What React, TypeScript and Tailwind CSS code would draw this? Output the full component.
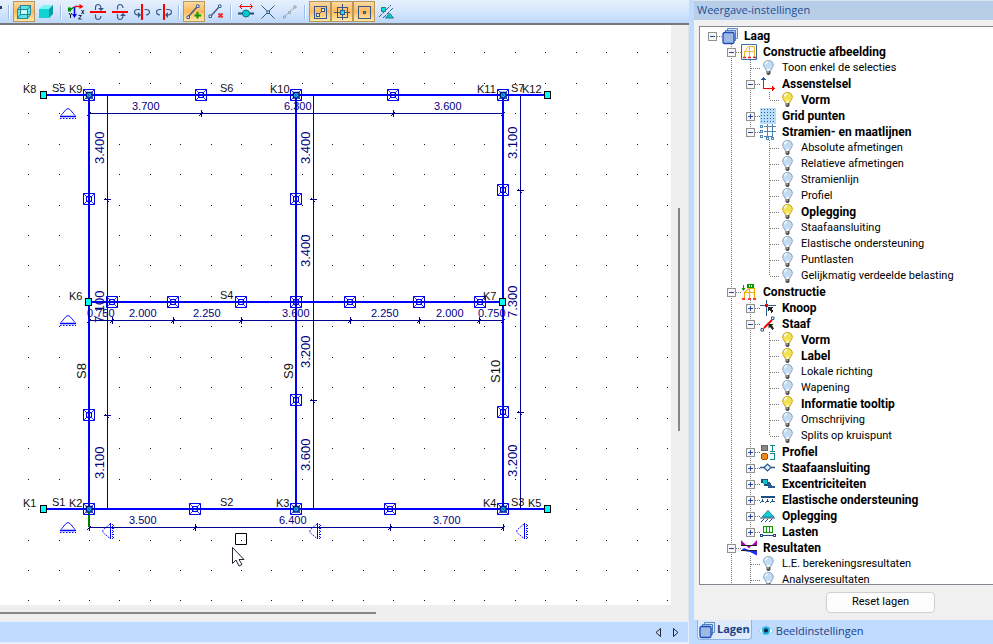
import { useState } from "react";
import type { ReactNode } from "react";

const NAVY = "#35598a";

/* ---------- toolbar icons ---------- */

function Icon({ children, crisp = false }: { children: ReactNode; crisp?: boolean }) {
  return (
    <svg
      className="block h-4 w-4 shrink-0 overflow-visible"
      viewBox="0 0 16 16"
      fill="none"
      shapeRendering={crisp ? "crispEdges" : "auto"}
      aria-hidden="true"
    >
      {children}
    </svg>
  );
}

const CubeWire = () => (
  <Icon>
    <path d="M1.500 5.500 4.500 1.500h10v9l-3 4h-10z" fill="#5fe3e3" />
    <path d="M5 6h6v4H5z" fill="#c4f8f8" />
    <path
      d="M1.500 5.500h10v9h-10zM1.500 5.500l3-4h10l-3 4M11.500 14.500l3-4v-9M4.500 1.500v9h10M1.500 14.500l3-4"
      stroke="#1a7f8c"
      strokeWidth="0.900"
    />
  </Icon>
);

const CubeSolid = () => (
  <Icon>
    <path d="M1 5h10v9H1z" fill="#12d3d3" />
    <path d="M1 5l4-4h10l-4 4z" fill="#7df3f3" />
    <path d="M11 5l4-4v9l-4 4z" fill="#0b9aa6" />
  </Icon>
);

const AxesIcon = () => (
  <Icon>
    <path d="M6.500 2.500H13" stroke="#f00" strokeWidth="1.500" />
    <path d="M11.500 0l4 2.500-4 2.500z" fill="#f00" />
    <path d="M6.500 3v9" stroke="#00f" strokeWidth="1.500" />
    <path d="M4 10h5l-2.500 4z" fill="#00f" />
    <path d="M6 3 1.500 6.500" stroke="#080" strokeWidth="1.500" />
    <path d="M0 3.500h3v4H0z" fill="#080" />
    <path d="M1 9l1.500 2L4 9M2.500 11v3" stroke="#111" />
    <path d="M13.500 6l2.500 4M16 6l-2.500 4M10.500 11.500h3l-3 3.500h3" stroke="#111" strokeWidth="0.900" />
  </Icon>
);

function RotateIcon({ vertical = false, flip = false }: { vertical?: boolean; flip?: boolean }) {
  return (
    <Icon>
      <g transform={`${vertical ? "rotate(90 8 8) " : ""}${flip ? "translate(0 16) scale(1 -1)" : ""}`}>
        <path d="M5.500 6V4q0-3.500 2.500-3.500T11 4v2M5.500 10.500v1.500q0 3.500 2.500 3.500t3-3.500" stroke={NAVY} strokeWidth="1.200" />
        <path d="M8 4h6l-3 3z" fill={NAVY} />
      </g>
      {vertical ? (
        <path d="M8 0v16" stroke="#f00" strokeWidth="2" />
      ) : (
        <path d="M0 8h16" stroke="#f00" strokeWidth="2" />
      )}
    </Icon>
  );
}

const AddBar = () => (
  <Icon>
    <path d="M2.500 12.500l8-9" stroke={NAVY} strokeWidth="1.300" />
    <path d="M1 12h2.500v2.500H1zM10.500 1H13v2.500h-2.500z" fill="#fff" stroke={NAVY} />
    <path d="M11.500 8v6.500M8.500 11.500h6.500" stroke="#0a9a00" strokeWidth="2" />
  </Icon>
);

const RemoveBar = () => (
  <Icon>
    <path d="M2.500 12.500l8-9" stroke={NAVY} strokeWidth="1.300" />
    <path d="M1 11h2.500v2.500H1zM10.500 1H13v2.500h-2.500z" fill="#fff" stroke={NAVY} />
    <path d="M10.500 9.500l4 4M14.500 9.500l-4 4" stroke="#f22" strokeWidth="2" />
  </Icon>
);

const SlideNode = () => (
  <Icon>
    <path d="M2 2.500h12" stroke="#f00" />
    <path d="M4 0 1.500 2.500 4 5M12 0l2.500 2.500L12 5" stroke="#f00" />
    <path d="M0 9.500h16" stroke="#1f4f80" strokeWidth="2" />
    <circle cx="8" cy="9.500" r="3.500" fill="#0cc" stroke="#0a6a80" />
  </Icon>
);

const CrossNode = () => (
  <Icon>
    <path d="M1.500 1.500l13 13M14.500 1.500l-13 13" stroke={NAVY} />
    <path d="M7 7h2.500v2.500H7z" fill="#dceaff" stroke={NAVY} />
  </Icon>
);

const SplitBar = () => (
  <Icon>
    <path d="M2 13 13.500 2.500" stroke="#9aa3ad" />
    <path d="M1.500 12h2v2h-2zM6.500 7.500h2v2h-2zM12 2h2v2h-2z" fill="#dceaff" stroke="#9aa3ad" />
  </Icon>
);

const SnapBar = () => (
  <Icon crisp>
    <path d="M2.500 2.500h12v12h-12z" stroke={NAVY} />
    <path d="M6 11l5-5" stroke={NAVY} />
    <path d="M4.500 9.500h3v3h-3zM9.500 4.500h3v3h-3z" fill="#ffe2a8" stroke={NAVY} />
  </Icon>
);

const SnapNode = () => (
  <Icon crisp>
    <path d="M3.500 3.500h10v10h-10zM8.500 0v16M0 8.500h16" stroke={NAVY} />
    <path d="M6.500 6.500h4v4h-4z" fill="#0ee" stroke={NAVY} />
  </Icon>
);

const SnapPoint = () => (
  <Icon crisp>
    <path d="M2.500 2.500h12v12h-12z" stroke={NAVY} />
    <path d="M7.500 7.500h2v2h-2z" fill="#3b8cd0" stroke={NAVY} />
  </Icon>
);

const SnapSupport = () => (
  <Icon>
    <path d="M1 13 13 1M5 14 15.500 3.500" stroke={NAVY} strokeDasharray="4 1" />
    <path d="M3.500 3.500h4v4h-4z" fill="#0dd" stroke="#287a90" />
    <path d="M11.500 9l4 5h-8z" fill="#0cc" stroke="#287a90" />
  </Icon>
);

type Tool = { label: string; icon: ReactNode; active?: boolean };

const toolGroups: Tool[][] = [
  [
    { label: "Draadmodel", icon: <CubeWire />, active: true },
    { label: "Volumemodel", icon: <CubeSolid /> },
  ],
  [
    { label: "Assen", icon: <AxesIcon /> },
    { label: "Roteer omhoog", icon: <RotateIcon /> },
    { label: "Roteer omlaag", icon: <RotateIcon flip /> },
    { label: "Roteer links", icon: <RotateIcon vertical flip /> },
    { label: "Roteer rechts", icon: <RotateIcon vertical /> },
  ],
  [
    { label: "Staaf toevoegen", icon: <AddBar />, active: true },
    { label: "Staaf verwijderen", icon: <RemoveBar /> },
  ],
  [
    { label: "Knoop verschuiven", icon: <SlideNode /> },
    { label: "Kruispunt", icon: <CrossNode /> },
    { label: "Staaf splitsen", icon: <SplitBar /> },
  ],
  [
    { label: "Selecteer staven", icon: <SnapBar />, active: true },
    { label: "Selecteer knopen", icon: <SnapNode />, active: true },
    { label: "Selecteer punten", icon: <SnapPoint />, active: true },
    { label: "Selecteer opleggingen", icon: <SnapSupport /> },
  ],
];

function Toolbar() {
  return (
    <div
      role="toolbar"
      className="flex h-[25px] shrink-0 items-start border-b-2 border-[#77797d] bg-linear-to-b from-[#e6f0fd] via-[#d5e6fc] to-[#bcd8fb] pt-px"
    >
      <div className="h-[21px] w-[5px] shrink-0 pt-[5px]">
        <span className="block h-[3px] w-[2px] bg-[#1f3d63]" />
      </div>
      {toolGroups.map((group, i) => (
        <div key={i} className="flex shrink-0 items-center">
          <span className="mx-[3px] h-[14px] w-[2px] border-r border-white bg-[#9dbde8]" />
          {group.map((tool) => (
            <button
              key={tool.label}
              type="button"
              aria-label={tool.label}
              className={`flex h-[21px] w-[22px] items-center justify-center ${
                tool.active
                  ? "border border-[#b8975c] bg-linear-to-b from-[#fbd9a0] via-[#fdb95c] to-[#ffe9a8]"
                  : ""
              }`}
            >
              {tool.icon}
            </button>
          ))}
        </div>
      ))}
    </div>
  );
}

/* ---------- drawing ---------- */

const gridX = Array.from({ length: 22 }, (_, i) => Math.floor(28.6 + 30.42 * i));
const gridY = Array.from({ length: 19 }, (_, i) => Math.floor(52.8 + 30.45 * i));

const innerNodes = [
  [201, 95], [393, 95],
  [89, 199], [296, 199], [503, 190],
  [112, 302], [173, 302], [241, 302], [296, 302], [350, 302], [419, 302], [480, 302],
  [89, 415], [296, 400], [503, 412],
  [195, 509], [390, 509],
];
const cornerNodes = [[89, 95], [296, 95], [503, 95], [89, 509], [296, 509], [503, 509]];
const endNodes = [[43, 95], [547, 95], [88, 302], [502, 302], [43, 509], [547, 509]];

const hTicks = [
  [89, 113], [201, 113], [393, 113], [503, 113],
  [89, 320], [112, 320], [173, 320], [241, 320], [350, 320], [419, 320], [479, 320], [503, 320],
  [89, 527], [195, 527], [390, 527], [503, 527],
];
const vTicks = [
  [107, 199], [107, 415], [313, 199], [313, 400], [520, 190], [520, 412],
];

const names: [string, number, number][] = [
  ["K8", 23, 93], ["S5", 52, 92], ["K9", 69, 93], ["S6", 220, 92], ["K10", 270, 93],
  ["K11", 477, 93], ["S7", 511, 92], ["K12", 522, 93],
  ["K6", 69, 300], ["S4", 220, 299], ["K7", 483, 300],
  ["K1", 23, 507], ["S1", 52, 506], ["K2", 69, 507], ["S2", 220, 506], ["K3", 276, 507],
  ["K4", 483, 507], ["S3", 511, 506], ["K5", 528, 507],
];
const barNames: [string, number, number][] = [["S8", 86, 379], ["S9", 293, 379], ["S10", 500, 383]];

const hDims: [string, number, number][] = [
  ["3.700", 132, 110], ["6.300", 284, 110], ["3.600", 434, 110],
  ["0.750", 87, 317], ["2.000", 129, 317], ["2.250", 193, 317], ["3.600", 282, 317],
  ["2.250", 371, 317], ["2.000", 436, 317], ["0.750", 478, 317],
  ["3.500", 129, 524], ["6.400", 279, 524], ["3.700", 433, 524],
];
const vDims: [string, number, number][] = [
  ["3.400", 104, 164], ["7.100", 104, 323], ["3.100", 104, 479],
  ["3.400", 310, 164], ["3.400", 310, 267], ["3.200", 310, 368], ["3.600", 310, 471],
  ["3.100", 517, 159], ["7.300", 517, 318], ["3.200", 517, 477],
];

function NodeBox({ x, y, corner = false }: { x: number; y: number; corner?: boolean }) {
  return (
    <g transform={`translate(${x} ${y})`} fill="none" stroke="#0000f0">
      <path d="M-5.500-5.500h11v11h-11z" />
      <path d="M-5.500-5.500l4 4M5.500-5.500l-4 4M-5.500 5.500l4-4M5.500 5.500l-4-4" strokeWidth="0.800" />
      {corner ? (
        <>
          <path d="M-2.500-2.500h5.500v5.500h-5.500z" fill="#22c8f0" stroke="#001a80" strokeWidth="1.500" />
          <path d="M-2-2l4.500 4.500M2.500-2l-4.500 4.500" stroke="#0a50c0" />
        </>
      ) : (
        <path d="M-2.500-2.500h5v5h-5zM-.5-.5h1v1h-1z" />
      )}
    </g>
  );
}

function Support({ x, y }: { x: number; y: number }) {
  return (
    <g transform={`translate(${x} ${y})`} fill="none" stroke="#00f">
      <path d="M1 7.500 6 1.500q2-2 4 0l5 6" strokeWidth="0.900" />
      <path d="M0 8.500h16" strokeWidth="1.500" />
      <path d="M0 10.500h16" strokeDasharray="1.500 1.500" />
    </g>
  );
}

function SideSupport({ x, y }: { x: number; y: number }) {
  return (
    <g transform={`translate(${x} ${y})`} fill="none" stroke="#00f">
      <path d="M8 1 1.500 6.500q-1.500 2 0 3.500L8 15.500" strokeWidth="0.900" strokeDasharray="2 1" />
      <path d="M8.500 0v16" />
      <path d="M10.500 1v16" strokeDasharray="1 1" />
      <path d="M11.500 2v15" strokeDasharray="1 2" />
    </g>
  );
}

function Model() {
  return (
    <svg
      className="block h-full w-full"
      fontFamily="'Liberation Sans', Arial, sans-serif"
      role="img"
      aria-label="Constructie"
    >
      <g transform="translate(0 -25)">
        <g fill="#111" shapeRendering="crispEdges">
          {gridY.map((y) => gridX.map((x) => <rect key={`${x}-${y}`} x={x} y={y} width="1" height="1" />))}
        </g>

        <path
          d="M89 113.500h414M89 320.500h414M89 527.500h414M107.500 96v413M313.500 96v413M520.500 96v413"
          stroke="#000090"
        />
        <g stroke="#000090">
          {hTicks.map(([x, y]) => (
            <path key={`${x}-${y}`} d={`M${x + 0.5} ${y - 3}v7M${x - 2} ${y + 3}l4-4`} />
          ))}
          {vTicks.map(([x, y]) => (
            <path key={`${x}-${y}`} d={`M${x - 3} ${y + 0.5}h7M${x - 2} ${y - 1}l4 4`} />
          ))}
        </g>

        <path d="M89 509v18" stroke="#008000" strokeWidth="2" />
        <path
          d="M43 95h505M89 302h414M43 509h505M89 95v414M296 95v414M503 95v414"
          stroke="#00f"
          strokeWidth="2"
        />

        {innerNodes.map(([x, y]) => (
          <NodeBox key={`${x}-${y}`} x={x} y={y} />
        ))}
        {cornerNodes.map(([x, y]) => (
          <NodeBox key={`${x}-${y}`} x={x} y={y} corner />
        ))}

        <g fontSize="11" fill="#000080">
          {hDims.map(([text, x, y]) => (
            <text key={`${x}-${y}`} x={x} y={y}>{text}</text>
          ))}
        </g>
        <g fontSize="13" fill="#000080">
          {vDims.map(([text, x, y]) => (
            <text key={`${x}-${y}`} transform={`translate(${x} ${y}) rotate(-90)`}>{text}</text>
          ))}
        </g>
        <g fontSize="11" fill="#111">
          {names.map(([text, x, y]) => (
            <text key={text} x={x} y={y}>{text}</text>
          ))}
        </g>
        <g fontSize="13" fill="#111">
          {barNames.map(([text, x, y]) => (
            <text key={text} transform={`translate(${x} ${y}) rotate(-90)`}>{text}</text>
          ))}
        </g>

        {endNodes.map(([x, y]) => (
          <rect key={`${x}-${y}`} x={x - 2.5} y={y - 3.5} width="6" height="7" fill="#0ff" stroke="#000" />
        ))}

        {[108, 315, 522].map((y) => (
          <Support key={y} x={60} y={y} />
        ))}
        {[102, 309, 516].map((x) => (
          <SideSupport key={x} x={x} y={523} />
        ))}

        <path d="M235.500 533.500h11v11h-11z" fill="none" stroke="#000" />
        <path d="M232.500 547.500v16l3.500-3.500 3 6 3-1.500-3-5h5z" fill="#fff" stroke="#223" />
      </g>
    </svg>
  );
}

function Workspace() {
  return (
    <main className="flex min-w-0 flex-1 flex-col">
      <Toolbar />
      <div className="flex min-h-0 flex-1 border-r border-[#e2e4e8] bg-[#efefef]">
        <div className="flex min-w-0 flex-1 flex-col">
          <div className="min-h-0 flex-1 bg-white">
            <Model />
          </div>
          <div className="flex h-4 shrink-0 items-center">
            <span className="h-[2px] w-[56%] bg-[#868686]" />
          </div>
        </div>
        <div className="flex w-[17px] shrink-0 flex-col pl-[7px]">
          <span className="h-[183px]" />
          <span className="h-[223px] w-[2px] bg-[#868686]" />
        </div>
      </div>
      <div className="flex h-[23px] shrink-0 items-center justify-end gap-[2px] border-t border-r border-b-2 border-[#e6eefb] bg-[#bfdbff] pr-1">
        <button type="button" aria-label="Vorige" className="flex h-4 w-4 items-center justify-center">
          <svg className="h-[9px] w-[6px]" viewBox="0 0 6 9" fill="none" stroke="#223" aria-hidden="true">
            <path d="M5.500 .5v8L1 4.500z" />
          </svg>
        </button>
        <button type="button" aria-label="Volgende" className="flex h-4 w-4 items-center justify-center">
          <svg className="h-[9px] w-[6px]" viewBox="0 0 6 9" fill="none" stroke="#223" aria-hidden="true">
            <path d="M.5 .5v8L5 4.500z" />
          </svg>
        </button>
      </div>
    </main>
  );
}

/* ---------- layer tree ---------- */

function Bulb({ on }: { on: boolean }) {
  return (
    <Icon>
      <path
        d="M8.500 .5c-3 0-4.800 2-4.800 4.500 0 2.200 1.600 3 2.500 5.500h4.600c.9-2.500 2.500-3.300 2.500-5.500 0-2.500-1.800-4.500-4.800-4.500z"
        fill={on ? "#efe255" : "#c3dcf3"}
        stroke={on ? "#d0a018" : "#86a5c0"}
      />
      <path d="M5.500 4.500c0-1.500 1-2.500 2.500-2.500" stroke="#fff" strokeWidth="1.300" />
      <path d="M7 8.500h3v2.500H7z" fill={on ? "#fbf6b0" : "#eef6fd"} />
      <path d="M6.500 11h4v2.500l-1 1.500h-2l-1-1.500z" fill="#555" />
      <path d="M7 12h2" stroke="#bbb" />
    </Icon>
  );
}

const LayersIcon = () => (
  <Icon>
    <path d="M5.500 .5h10v10h-10z" fill="#d8e8fa" stroke="#5f8fc5" />
    <path d="M3.500 2.500h10v10h-10z" fill="#b9d3f2" stroke="#4a7ec0" />
    <rect x="1" y="4.500" width="11" height="11" rx="1.500" fill="#9db9e6" stroke="#2348b8" strokeWidth="1.300" />
  </Icon>
);

const icons: Record<string, ReactNode> = {
  layers: <LayersIcon />,
  frame: (
    <Icon>
      <path d="M.5 .5h15v15H.5z" fill="#fff" stroke="#3a6ea8" />
      <path d="M3.500 13V7.500l4-5h6V13M8.500 13V3M3.500 7.500h10" stroke="#f5b52a" />
      <path d="M2 13.500h3M7 13.500h3M12 13.500h3" stroke="#f02020" strokeWidth="1.500" />
    </Icon>
  ),
  axes: (
    <Icon crisp>
      <path d="M3.500 2v10" stroke="#1f5fa0" />
      <path d="M1 4l2.500-3.500L6 4z" fill="#1f5fa0" />
      <path d="M3 12.500h10" stroke="#f00" />
      <path d="M12 10l3.500 2.500L12 15z" fill="#f00" />
    </Icon>
  ),
  grid: (
    <Icon crisp>
      <path d="M0 0h16v16H0z" fill="#b9dcfa" />
      <path d="M1 1.500h15M1 4.500h15M1 7.500h15M1 10.500h15M1 13.500h15" stroke="#2a62a0" strokeDasharray="1 2" />
    </Icon>
  ),
  stramien: (
    <Icon crisp>
      <path d="M4 2.500h12M4 7.500h12M4 12.500h9M7.500 0v12M12.500 0v12" stroke="#4f86b8" />
      <path d="M.5 1.500h2v2h-2zM.5 6.500h2v2h-2zM.5 11.500h2v2h-2zM6.500 13.500h2v2h-2zM11.500 13.500h2v2h-2z" stroke="#4f86b8" />
    </Icon>
  ),
  constructie: (
    <Icon>
      <path d="M3.500 14V8.500l4-4h6V14M8.500 14V5M3.500 8.500h10" stroke="#f5a800" strokeWidth="1.200" />
      <path d="M2.500 1v4" stroke="#0a9a00" />
      <path d="M.5 4h4L2.500 7z" fill="#0a9a00" />
      <path d="M6 0h7v4H6z" fill="#0a9a00" />
      <path d="M8.500 1v2M10.500 1v2" stroke="#fff" />
      <path d="M1 15h3M7 15h3M12 15h3" stroke="#f00" strokeWidth="1.500" />
    </Icon>
  ),
  knoop: (
    <Icon crisp>
      <path d="M0 5.500h16M6.500 0v16" stroke="#2a5a8c" />
      <path d="M5 4h3v3H5z" fill="#f00" />
      <path d="M8 7h5l-1.500 1.500L13 11l-1.500 1.500L9.500 10 8 11.500z" fill="#222" />
    </Icon>
  ),
  staaf: (
    <Icon>
      <path d="M4 12 12 4" stroke="#f00" strokeWidth="2" />
      <path d="M1 12.500h2.500V15H1zM11.500 1H14v2.500h-2.500z" fill="#fff" stroke="#2a5a8c" />
      <path d="M8.500 8h5L12 9.500l2 3-1.500 1.500L10 11l-1.500 1.500z" fill="#222" />
    </Icon>
  ),
  profiel: (
    <Icon crisp>
      <path d="M1.500 1.500h6v5h-6z" fill="#888" stroke="#666" />
      <rect x="1.500" y="9.500" width="6" height="6" rx="2" fill="#f08a1c" stroke="#9a5208" />
      <path d="M10 1.500h5M12.500 1v6M10 7.500h5M10 9.500h4.500v6H10" stroke="#0a8a8a" />
    </Icon>
  ),
  aansluiting: (
    <Icon>
      <path d="M0 7.500h4.500M11 7.500h4" stroke="#2a5a8c" strokeWidth="1.500" />
      <path d="M4 7.500 7.500 4l3.500 3.500L7.500 11z" fill="#e4eef8" stroke="#2a5a8c" strokeWidth="1.200" />
    </Icon>
  ),
  excentriciteit: (
    <Icon crisp>
      <path d="M1 3h7v7H4V7H1z" fill="#1f4f80" />
      <path d="M3 4h4v4H3z" fill="#0cc" />
      <path d="M8 6v6h7v-2h-3l-2-4z" fill="#2a5a8c" />
    </Icon>
  ),
  elastisch: (
    <Icon crisp>
      <path d="M1 5h14" stroke="#1f4f80" strokeWidth="2" />
      <path d="M2.500 7v2M7.500 7v2M12.500 7v2M0 11l2-2h2M5 11l2-2h2M10 11l2-2h3" stroke="#1f4f80" />
    </Icon>
  ),
  oplegging: (
    <Icon>
      <path d="M8 2.500l6 6.500H2z" fill="#12d3d3" stroke="#16809a" />
      <path d="M0 10h15M1 14l3-3M5 14l3-3M9 14l3-3" stroke="#1f4f80" />
    </Icon>
  ),
  lasten: (
    <Icon crisp>
      <path d="M3.500 2.500h9v6h-9zM6.500 3v6M9.500 3v6" stroke="#0a9a00" />
      <path d="M1 11.500h14" stroke="#1f4f80" />
      <path d="M.5 10.500h2v2h-2zM13.500 10.500h2v2h-2z" fill="#fff" stroke="#1f4f80" />
    </Icon>
  ),
  resultaten: (
    <Icon>
      <path d="M0 0l5 5h6l5-5v6H0z" fill="#b000b0" />
      <path d="M5 5h6L8 8.500z" fill="#b000b0" />
      <path d="M0 5.500h16" stroke="#222" />
      <path d="M0 10.500h16V15.500L9 12 3 11z" fill="#2030ff" />
      <path d="M0 10.500l3-2.500 6 2.500z" fill="#2030ff" />
      <path d="M0 10.500h16" stroke="#222" />
    </Icon>
  ),
  off: <Bulb on={false} />,
  on: <Bulb on />,
};

// `more` marks a branch whose guide line runs on past its last loaded child
type TreeItem = {
  label: string;
  icon: string;
  bold?: boolean;
  closed?: boolean;
  more?: boolean;
  children?: TreeItem[];
};

const off = (label: string): TreeItem => ({ label, icon: "off" });
const on = (label: string): TreeItem => ({ label, icon: "on", bold: true });
const closed = (label: string, icon: string): TreeItem => ({ label, icon, bold: true, closed: true, children: [] });

const layerTree: TreeItem = {
  label: "Laag",
  icon: "layers",
  bold: true,
  more: true,
  children: [
    {
      label: "Constructie afbeelding",
      icon: "frame",
      bold: true,
      children: [
        off("Toon enkel de selecties"),
        { label: "Assenstelsel", icon: "axes", bold: true, children: [on("Vorm")] },
        closed("Grid punten", "grid"),
        {
          label: "Stramien- en maatlijnen",
          icon: "stramien",
          bold: true,
          children: [
            off("Absolute afmetingen"),
            off("Relatieve afmetingen"),
            off("Stramienlijn"),
            off("Profiel"),
            on("Oplegging"),
            off("Staafaansluiting"),
            off("Elastische ondersteuning"),
            off("Puntlasten"),
            off("Gelijkmatig verdeelde belasting"),
          ],
        },
      ],
    },
    {
      label: "Constructie",
      icon: "constructie",
      bold: true,
      children: [
        closed("Knoop", "knoop"),
        {
          label: "Staaf",
          icon: "staaf",
          bold: true,
          children: [
            on("Vorm"),
            on("Label"),
            off("Lokale richting"),
            off("Wapening"),
            on("Informatie tooltip"),
            off("Omschrijving"),
            off("Splits op kruispunt"),
          ],
        },
        closed("Profiel", "profiel"),
        closed("Staafaansluiting", "aansluiting"),
        closed("Excentriciteiten", "excentriciteit"),
        closed("Elastische ondersteuning", "elastisch"),
        closed("Oplegging", "oplegging"),
        closed("Lasten", "lasten"),
      ],
    },
    {
      label: "Resultaten",
      icon: "resultaten",
      bold: true,
      more: true,
      children: [off("L.E. berekeningsresultaten"), off("Analyseresultaten")],
    },
  ],
};

function Guide({ d }: { d: string }) {
  return (
    <svg className="block h-4 w-[19px] shrink-0" viewBox="0 0 19 16" fill="none" shapeRendering="crispEdges" aria-hidden="true">
      <path d={d} stroke="#777" strokeDasharray="1 1" />
    </svg>
  );
}

function Branch({ item, guides, last, root = false }: { item: TreeItem; guides: boolean[]; last: boolean; root?: boolean }) {
  const [open, setOpen] = useState(!item.closed);
  const join = `${root ? "" : last ? "M9.500 0v8" : "M9.500 0v16"}M10 8.500h9`;

  return (
    <li role="treeitem" aria-expanded={item.children ? open : undefined}>
      <div className="flex h-4 items-center">
        {guides.map((line, i) => (
          <Guide key={i} d={line ? "M9.500 0v16" : ""} />
        ))}
        {item.children ? (
          <button type="button" aria-label={`${item.label} in- of uitklappen`} onClick={() => setOpen(!open)}>
            <svg className="block h-4 w-[19px]" viewBox="0 0 19 16" fill="none" shapeRendering="crispEdges" aria-hidden="true">
              <path d={join} stroke="#777" strokeDasharray="1 1" />
              <rect x="5.500" y="4.500" width="8" height="8" fill="#f6f6f6" stroke="#919191" />
              <path d={open ? "M7 8.500h5" : "M7 8.500h5M9.500 6v5"} stroke="#2a4a9c" />
            </svg>
          </button>
        ) : (
          <Guide d={join} />
        )}
        {icons[item.icon]}
        <span
          className={`pl-[6px] leading-4 whitespace-nowrap text-black ${item.bold ? "text-[12px] font-bold" : "text-[11px]"}`}
        >
          {item.label}
        </span>
      </div>
      {open && item.children && item.children.length > 0 && (
        <ul role="group">
          {item.children.map((child, i) => (
            <Branch
              key={child.label}
              item={child}
              guides={[...guides, !last]}
              last={!item.more && i === item.children!.length - 1}
            />
          ))}
        </ul>
      )}
    </li>
  );
}

function SettingsPanel() {
  return (
    <aside className="flex w-[304px] shrink-0 flex-col border-l-[5px] border-[#bfdbff] bg-[#f0f0f0] font-['Roboto',sans-serif]">
      <h2 className="h-5 shrink-0 border-t border-[#dbe6f4] bg-[#b8cde8] pl-[3px] font-['Open_Sans',sans-serif] text-[11px] leading-[18px] text-[#1e4f94]">
        Weergave-instellingen
      </h2>
      <div className="mt-[6px] ml-[5px] min-h-0 flex-1 overflow-hidden border-y border-l border-[#828790] bg-white pt-px pl-[3px]">
        <ul role="tree">
          <Branch item={layerTree} guides={[]} last root />
        </ul>
      </div>
      <div className="flex h-[35px] shrink-0 items-center pl-[132px]">
        <button type="button" className="h-[21px] w-[109px] rounded border border-[#d0d0d0] bg-[#fdfdfd] text-[11px] text-black">
          Reset lagen
        </button>
      </div>
      <div
        role="tablist"
        className="flex h-6 shrink-0 items-start gap-[6px] bg-[#bfdbff] pl-[3px] font-['Open_Sans',sans-serif] text-[11px] text-[#1e4080]"
      >
        <button
          type="button"
          role="tab"
          aria-selected="true"
          className="flex h-5 items-center gap-[2px] rounded-b border border-t-0 border-[#8fb4e4] bg-[#deebfc] px-px font-bold"
        >
          <LayersIcon />
          Lagen
        </button>
        <button type="button" role="tab" aria-selected="false" className="flex h-[22px] items-center gap-[2px]">
          <svg className="h-4 w-4" viewBox="0 0 16 16" aria-hidden="true">
            <path d="M0.500 8q7.500-8 15 0-7.500 8-15 0z" fill="#fff" stroke="#8ccbee" />
            <circle cx="8" cy="7.500" r="4" fill="#1cb0e4" />
            <circle cx="8" cy="7.500" r="2" fill="#0a2440" />
          </svg>
          Beeldinstellingen
        </button>
      </div>
    </aside>
  );
}

export default function App() {
  return (
    <div className="flex h-screen overflow-hidden bg-[#bfdbff]">
      <Workspace />
      <SettingsPanel />
    </div>
  );
}
